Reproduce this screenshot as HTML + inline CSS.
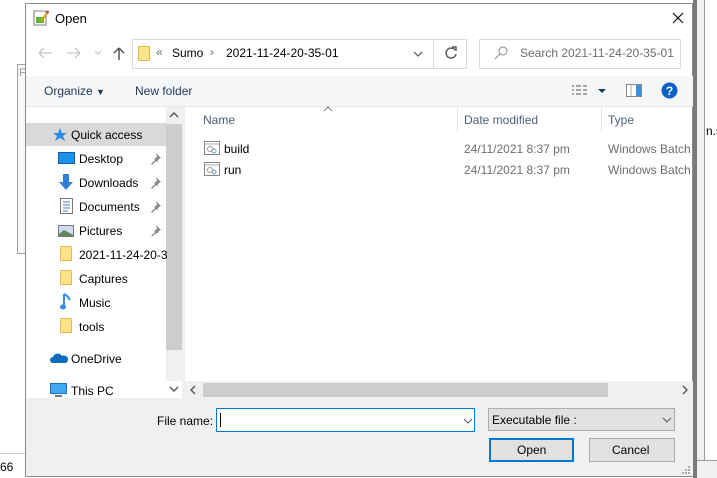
<!DOCTYPE html>
<html><head><meta charset="utf-8"><style>
*{margin:0;padding:0;box-sizing:border-box}
body{width:717px;height:478px;overflow:hidden;background:#fff;font-family:"Liberation Sans",sans-serif;font-size:12px;color:#000;position:relative}
.a{position:absolute;white-space:nowrap}
.dim{color:#6d6d6d}
.hdr{color:#4c607a}
.fold{position:absolute;width:12px;height:15px;background:#ffe38a;border:1px solid #e3b94a;border-radius:1px}
</style></head><body>
<div class="a" style="left:17px;top:64px;width:10px;height:190px;border:1px solid #a0a0a0;border-right:none;background:#f7f7f7"></div>
<div class="a" style="left:19px;top:67px;font-size:11px;color:#999">F</div>
<div class="a" style="left:0;top:453px;width:30px;height:25px;border-top:1px solid #ccc;background:#fff"></div>
<div class="a" style="left:0;top:460px;font-size:12px">66</div>
<div class="a" style="left:693px;top:0;width:4px;height:478px;background:#7a7a7a"></div>
<div class="a" style="left:697px;top:0;width:8px;height:460px;background:#f0f0f0;border-right:1px solid #999"></div>
<div class="a" style="left:706px;top:124px;font-size:12px">n.s</div>
<div class="a" style="left:697px;top:460px;width:20px;height:18px;border-top:1px solid #999;background:#f0f0f0"></div>

<div class="a" style="left:25px;top:3px;width:668px;height:474px;background:#fff;border:1px solid #8a8a8a"></div>
<svg class="a" style="left:33px;top:9px" width="17" height="17" viewBox="0 0 17 17"><rect x="1" y="2" width="12" height="14" fill="#fff" stroke="#777"/><rect x="3" y="8" width="8" height="6" fill="#5cb82c"/><path d="M2 2h10" stroke="#999" stroke-dasharray="1 1"/><path d="M8 12L15 3" stroke="#d4a017" stroke-width="2"/><path d="M14 4l1.5-2" stroke="#c0392b" stroke-width="2"/></svg>
<div class="a" style="left:55px;top:11px;font-size:13px">Open</div>
<svg class="a" style="left:672px;top:12px" width="12" height="12"><path d="M1 1L11 11M11 1L1 11" stroke="#000" stroke-width="1.1"/></svg>

<svg class="a" style="left:37px;top:46px" width="100" height="14"><path d="M2 7h13M2 7l5-5M2 7l5 5" stroke="#c5c5c5" stroke-width="1.3" fill="none"/><path d="M30 7h13M43 7l-5-5M43 7l-5 5" stroke="#c5c5c5" stroke-width="1.3" fill="none"/><path d="M58 5l3 3 3-3" stroke="#c5c5c5" fill="none"/><path d="M82 14V2M82 2l-5 5M82 2l5 5" stroke="#555" stroke-width="1.5" fill="none"/></svg>
<div class="a" style="left:132px;top:39px;width:335px;height:30px;border:1px solid #d9d9d9"></div>
<div class="a" style="left:433px;top:40px;width:1px;height:28px;background:#d9d9d9"></div>
<div class="fold" style="left:138px;top:46px"></div>
<div class="a dim" style="left:156px;top:45px;font-size:12px">«</div>
<div class="a" style="left:172px;top:46px">Sumo</div>
<div class="a dim" style="left:210px;top:45px">›</div>
<div class="a" style="left:226px;top:46px">2021-11-24-20-35-01</div>
<svg class="a" style="left:413px;top:51px" width="10" height="6"><path d="M1 1l4 4 4-4" stroke="#555" stroke-width="1.2" fill="none"/></svg>
<svg class="a" style="left:444px;top:46px" width="14" height="14"><path d="M11 4A5 5 0 1 0 12 8" stroke="#555" stroke-width="1.4" fill="none"/><path d="M8 1h4v4" stroke="#555" stroke-width="1.4" fill="none"/></svg>
<div class="a" style="left:479px;top:39px;width:202px;height:30px;border:1px solid #d9d9d9"></div>
<svg class="a" style="left:494px;top:46px" width="14" height="14"><circle cx="9" cy="5" r="4" stroke="#888" fill="none"/><path d="M6 8L1 13" stroke="#888"/></svg>
<div class="a dim" style="left:520px;top:46px">Search 2021-11-24-20-35-01</div>

<div class="a" style="left:26px;top:76px;width:667px;height:31px;background:#f5f6f7;border-bottom:1px solid #e5e5e5"></div>
<div class="a" style="left:44px;top:84px;color:#1e395b">Organize <span style="font-size:9px">▼</span></div>
<div class="a" style="left:135px;top:84px;color:#1e395b">New folder</div>
<svg class="a" style="left:571px;top:84px" width="48" height="14"><g stroke="#555"><path d="M1 2h2M1 6h2M1 10h2M5 2h5M5 6h5M5 10h5M12 2h4M12 6h4M12 10h4"/></g><path d="M27 5h8l-4 4z" fill="#1e395b"/></svg>
<svg class="a" style="left:626px;top:84px" width="16" height="13"><rect x="0.5" y="0.5" width="15" height="12" fill="#fff" stroke="#888"/><rect x="10" y="1" width="5" height="11" fill="#3c8ee0"/><path d="M5 1v11" stroke="#aaa"/></svg>
<svg class="a" style="left:661px;top:82px" width="17" height="17"><circle cx="8.5" cy="8.5" r="8" fill="#0b62c4"/><text x="8.5" y="13" text-anchor="middle" font-family="Liberation Sans" font-weight="bold" font-size="12" fill="#fff">?</text></svg>

<div class="a" style="left:26px;top:107px;width:140px;height:290px;background:#fff"></div>
<div class="a" style="left:26px;top:123px;width:140px;height:23px;background:#d9d9d9"></div>
<div class="a" style="left:166px;top:107px;width:16px;height:274px;background:#f0f0f0"></div>
<div class="a" style="left:166px;top:124px;width:16px;height:226px;background:#cdcdcd"></div>
<svg class="a" style="left:169px;top:112px" width="10" height="6"><path d="M1 5l4-4 4 4" stroke="#555" stroke-width="1.4" fill="none"/></svg>
<svg class="a" style="left:169px;top:386px" width="10" height="6"><path d="M1 1l4 4 4-4" stroke="#555" stroke-width="1.4" fill="none"/></svg>
<div class="a" style="left:182px;top:107px;width:3px;height:291px;background:#f0f0f0"></div>
<svg class="a" style="left:52px;top:127px" width="16" height="15"><path d="M8 1l2 5h5l-4 3 2 5-5-3-5 3 2-5-4-3h5z" fill="#2f8be6"/></svg>
<div class="a" style="left:71px;top:128px">Quick access</div>

<svg class="a" style="left:58px;top:152px" width="17" height="13"><rect x="0.5" y="0.5" width="16" height="11" fill="#1e90e8" stroke="#0a60b0"/></svg>
<div class="a" style="left:79px;top:152px">Desktop</div>
<svg class="a" style="left:58px;top:174px" width="16" height="17"><path d="M5 0h6v8h4l-7 8-7-8h4z" fill="#2f7fd9"/></svg>
<div class="a" style="left:79px;top:176px">Downloads</div>
<svg class="a" style="left:60px;top:198px" width="13" height="16"><rect x="0.5" y="0.5" width="12" height="15" fill="#fff" stroke="#777"/><path d="M3 4h7M3 7h7M3 10h7M3 13h5" stroke="#4a7fc0"/></svg>
<div class="a" style="left:79px;top:200px">Documents</div>
<svg class="a" style="left:58px;top:225px" width="16" height="12"><rect x="0.5" y="0.5" width="15" height="11" fill="#cde" stroke="#777"/><path d="M1 9l5-4 9 5v1H1z" fill="#5a8a5a"/></svg>
<div class="a" style="left:79px;top:224px">Pictures</div>
<svg class="a" style="left:150px;top:152px" width="12" height="84"><g fill="#8a8a8a"><path d="M6 1l5 5-2 1-2 3-1-1-4 4-1-1 4-4-1-1 3-2z"/><path transform="translate(0,24)" d="M6 1l5 5-2 1-2 3-1-1-4 4-1-1 4-4-1-1 3-2z"/><path transform="translate(0,48)" d="M6 1l5 5-2 1-2 3-1-1-4 4-1-1 4-4-1-1 3-2z"/><path transform="translate(0,72)" d="M6 1l5 5-2 1-2 3-1-1-4 4-1-1 4-4-1-1 3-2z"/></g></svg>
<div class="fold" style="left:60px;top:246px"></div><div class="a" style="left:79px;top:248px">2021-11-24-20-3</div>
<div class="fold" style="left:60px;top:270px"></div><div class="a" style="left:79px;top:272px">Captures</div>
<svg class="a" style="left:60px;top:293px" width="12" height="18"><path d="M4 1v12" stroke="#2f8be6" stroke-width="2"/><ellipse cx="3" cy="14" rx="3" ry="2.5" fill="#2f8be6"/><path d="M4 1q4 2 6 6" stroke="#2f8be6" stroke-width="2" fill="none"/></svg>
<div class="a" style="left:79px;top:296px">Music</div>
<div class="fold" style="left:60px;top:318px"></div><div class="a" style="left:79px;top:320px">tools</div>
<svg class="a" style="left:50px;top:352px" width="18" height="12"><path d="M3 11a3 3 0 0 1 0-6a5 5 0 0 1 9-1a4 4 0 0 1 4 7z" fill="#0f6cbd"/></svg>
<div class="a" style="left:71px;top:352px">OneDrive</div>
<svg class="a" style="left:50px;top:383px" width="17" height="15"><rect x="0.5" y="0.5" width="16" height="10" fill="#3fa9f5" stroke="#1a73b8"/><path d="M5 13h7" stroke="#777" stroke-width="2"/></svg>
<div class="a" style="left:71px;top:384px">This PC</div>

<svg class="a" style="left:323px;top:106px" width="10" height="6"><path d="M1 5l4-4 4 4" stroke="#777" fill="none"/></svg>
<div class="a hdr" style="left:203px;top:113px">Name</div>
<div class="a" style="left:457px;top:107px;width:1px;height:25px;background:#e5e5e5"></div>
<div class="a hdr" style="left:464px;top:113px">Date modified</div>
<div class="a" style="left:601px;top:107px;width:1px;height:25px;background:#e5e5e5"></div>
<div class="a hdr" style="left:608px;top:113px">Type</div>
<svg class="a" style="left:204px;top:141px" width="16" height="14"><rect x="0.5" y="0.5" width="15" height="13" fill="#fff" stroke="#888"/><path d="M1 3h14" stroke="#aaa"/><circle cx="6" cy="8" r="2.5" fill="none" stroke="#999"/><circle cx="10" cy="10" r="2" fill="none" stroke="#6aa0d8"/></svg>
<div class="a" style="left:224px;top:142px">build</div>
<div class="a dim" style="left:464px;top:142px">24/11/2021 8:37 pm</div>
<div class="a dim" style="left:608px;top:142px">Windows Batch</div>
<svg class="a" style="left:204px;top:162px" width="16" height="14"><rect x="0.5" y="0.5" width="15" height="13" fill="#fff" stroke="#888"/><path d="M1 3h14" stroke="#aaa"/><circle cx="6" cy="8" r="2.5" fill="none" stroke="#999"/><circle cx="10" cy="10" r="2" fill="none" stroke="#6aa0d8"/></svg>
<div class="a" style="left:224px;top:163px">run</div>
<div class="a dim" style="left:464px;top:163px">24/11/2021 8:37 pm</div>
<div class="a dim" style="left:608px;top:163px">Windows Batch</div>

<div class="a" style="left:185px;top:381px;width:508px;height:17px;background:#f0f0f0"></div>
<div class="a" style="left:203px;top:383px;width:405px;height:14px;background:#cdcdcd"></div>
<svg class="a" style="left:190px;top:385px" width="6" height="10"><path d="M5 1L1 5l4 4" stroke="#555" stroke-width="1.4" fill="none"/></svg>
<svg class="a" style="left:682px;top:385px" width="6" height="10"><path d="M1 1l4 4-4 4" stroke="#555" stroke-width="1.4" fill="none"/></svg>

<div class="a" style="left:26px;top:398px;width:667px;height:78px;background:#f0f0f0"></div>
<div class="a" style="left:157px;top:414px">File name:</div>
<div class="a" style="left:216px;top:408px;width:259px;height:24px;background:#fff;border:1px solid #0078d7"></div>
<div class="a" style="left:220px;top:413px;width:1px;height:14px;background:#000"></div>
<svg class="a" style="left:463px;top:418px" width="10" height="6"><path d="M1 1l4 4 4-4" stroke="#555" fill="none"/></svg>
<div class="a" style="left:488px;top:408px;width:187px;height:23px;background:#e1e1e1;border:1px solid #adadad"></div>
<div class="a" style="left:492px;top:413px">Executable file :</div>
<svg class="a" style="left:662px;top:417px" width="10" height="6"><path d="M1 1l4 4 4-4" stroke="#555" fill="none"/></svg>
<div class="a" style="left:489px;top:438px;width:85px;height:24px;background:#e1e1e1;border:2px solid #0078d7"></div>
<div class="a" style="left:517px;top:443px">Open</div>
<div class="a" style="left:589px;top:438px;width:86px;height:24px;background:#e1e1e1;border:1px solid #adadad"></div>
<div class="a" style="left:612px;top:443px">Cancel</div>
<svg class="a" style="left:682px;top:466px" width="9" height="9"><g fill="#aaa"><rect x="6" y="0" width="2" height="2"/><rect x="3" y="3" width="2" height="2"/><rect x="6" y="3" width="2" height="2"/><rect x="0" y="6" width="2" height="2"/><rect x="3" y="6" width="2" height="2"/><rect x="6" y="6" width="2" height="2"/></g></svg>
</body></html>
